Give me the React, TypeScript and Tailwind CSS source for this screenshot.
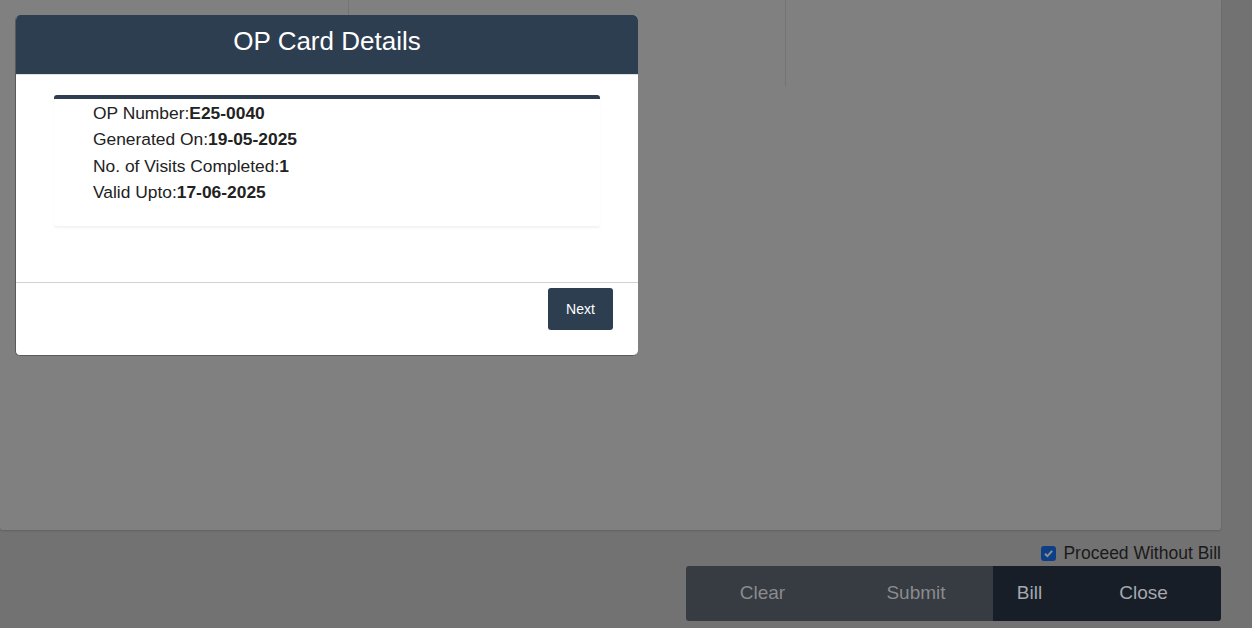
import React from 'react'

const rows: [string, string][] = [
  ['OP Number:', 'E25-0040'],
  ['Generated On:', '19-05-2025'],
  ['No. of Visits Completed:', '1'],
  ['Valid Upto:', '17-06-2025'],
]

function OpCardModal() {
  return (
    <div className="absolute left-[15px] top-[15px] w-[623px] h-[341px] bg-white rounded-[5px] border border-[#5a5a5a] border-t-0 border-r-0 flex flex-col overflow-hidden">
      <div className="h-[59px] bg-[#2d3e50] flex items-center justify-center pb-[7px] text-white text-[26px] shrink-0">
        OP Card Details
      </div>
      <div className="h-px bg-[#dcdfe4]" />
      <div className="flex-1 px-[38px] pt-[20px]">
        <div className="border-t-4 border-[#2d3e50] rounded-[3px] shadow-[0_2px_2px_rgba(0,0,0,0.05)] pl-[39px] pt-px pb-[21px]">
          {rows.map(([label, value]) => (
            <div key={label} className="text-[17.4px] leading-[26.3px] text-[#222]">
              {label}<span className="font-bold">{value}</span>
            </div>
          ))}
        </div>
      </div>
      <div className="h-px bg-[#cfd2d8]" />
      <div className="h-[72px] flex justify-end pt-[5px] pr-[25px]">
        <button className="w-[65px] h-[42px] bg-[#2d3e50] rounded-[3px] text-white text-[14px]">Next</button>
      </div>
    </div>
  )
}

export default function App() {
  return (
    <div className="relative w-[1252px] h-[628px] bg-[#727272] overflow-hidden" style={{ fontFamily: '"Liberation Sans", Arial, sans-serif' }}>
      <div className="relative w-[1221px] h-[530px] bg-[#808080] rounded-b-[3px] shadow-[0_1px_2px_rgba(0,0,0,0.15)]">
        <div className="absolute left-[348px] top-0 h-[86px] w-px bg-[#747474]" />
        <div className="absolute left-[785px] top-0 h-[86px] w-px bg-[#747474]" />
      </div>
      <div className="w-[1221px] flex flex-col items-end">
        <label className="mt-[13px] flex items-center gap-[7px] text-[17.5px] leading-[20px] text-[#1a1a1a]">
          <span className="w-[15px] h-[15px] shrink-0 rounded-[3px] bg-[#0e3f86] flex items-center justify-center">
            <svg width="11" height="11" viewBox="0 0 10 10">
              <path d="M1.8 5.2 L4 7.4 L8.3 2.6" fill="none" stroke="#8a8f96" strokeWidth="1.8" />
            </svg>
          </span>
          Proceed Without Bill
        </label>
        <div className="mt-[3px] flex h-[55px] text-[19px]">
          <button className="w-[153px] bg-[#373b42] text-[#8a8b8d] rounded-l-[3px]">Clear</button>
          <button className="w-[154px] bg-[#373b42] text-[#8a8b8d]">Submit</button>
          <button className="w-[73px] bg-[#171e28] text-[#a5a8ad]">Bill</button>
          <button className="w-[155px] bg-[#171e28] text-[#a5a8ad] rounded-r-[3px]">Close</button>
        </div>
      </div>
      <OpCardModal />
    </div>
  )
}
